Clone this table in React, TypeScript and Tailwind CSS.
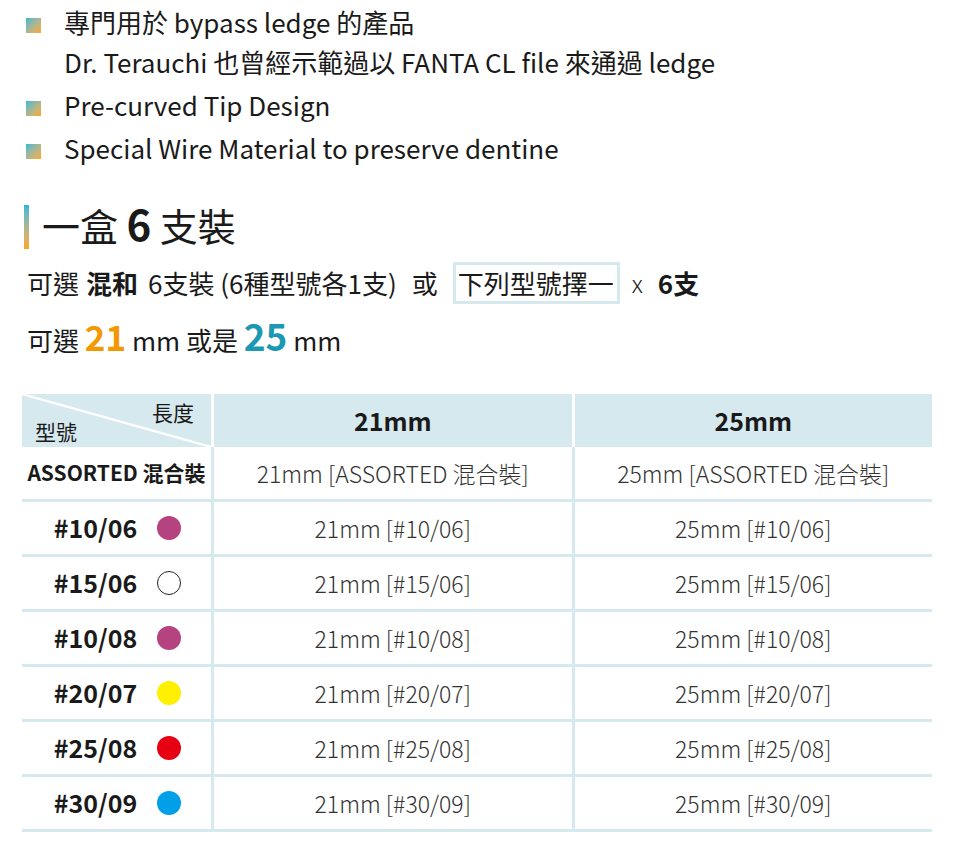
const FONT = "font-['Noto_Sans_CJK_TC','Noto_Sans',sans-serif]";

const features = [
  ["專門用於 bypass ledge 的產品", "Dr. Terauchi 也曾經示範過以 FANTA CL file 來通過 ledge"],
  ["Pre-curved Tip Design"],
  ["Special Wire Material to preserve dentine"],
];

const models = [
  { name: "#10/06", color: "bg-[#b4437f]" },
  { name: "#15/06", color: "bg-white border border-[#222]" },
  { name: "#10/08", color: "bg-[#b4437f]" },
  { name: "#20/07", color: "bg-[#fff000]" },
  { name: "#25/08", color: "bg-[#e60012]" },
  { name: "#30/09", color: "bg-[#00a0e9]" },
];

function Row({ first, a, b }: { first: React.ReactNode; a: string; b: string }) {
  return (
    <div className="flex h-[55px] border-b-[3px] border-[#d6e9ef]">
      <div className="w-[189px] flex items-center justify-center">{first}</div>
      <div className="flex-1 border-l-[3px] border-[#d6e9ef] flex items-center justify-center text-[23px] font-light text-[#333]">
        {a}
      </div>
      <div className="flex-1 border-l-[3px] border-[#d6e9ef] flex items-center justify-center text-[23px] font-light text-[#333]">
        {b}
      </div>
    </div>
  );
}

export default function App() {
  return (
    <div className={`${FONT} bg-white w-[959px] h-[856px] text-[#1a1a1a] overflow-hidden`}>
      {/* Feature bullets */}
      <ul className="pl-[26px] pt-[2px] flex flex-col gap-[3px]">
        {features.map((lines, i) => (
          <li key={i} className="flex gap-[23px] text-[26px] leading-[40px]">
            <span className="mt-[16px] w-[15px] h-[15px] shrink-0 bg-gradient-to-br from-[#18b8d4] to-[#fca810]" />
            <div>
              {lines.map((l) => (
                <div key={l}>{l}</div>
              ))}
            </div>
          </li>
        ))}
      </ul>

      {/* Heading */}
      <div className="mt-[33px] pl-[24px] flex items-center gap-[13px]">
        <span className="w-[5px] h-[44px] bg-gradient-to-b from-[#1ab8d8] to-[#fca810]" />
        <h2 className="text-[38px] leading-[44px] font-normal pb-[5px]">
          一盒 <span className="font-bold text-[42px]">6</span> 支裝
        </h2>
      </div>

      <div className="mt-[9px] pl-[27px] text-[26px] leading-[44px] flex items-center whitespace-nowrap">
        <span>可選</span>
        <span className="ml-[7px] font-bold">混和</span>
        <span className="ml-[10px]">6支裝 (6種型號各1支)</span>
        <span className="ml-[15px]">或</span>
        <span className="ml-[15px] border-[3px] border-[#d6e9ef] pl-[2px] pr-[3px] leading-[36px]">下列型號擇一</span>
        <span className="ml-[12px] text-[24px] font-light">x</span>
        <span className="ml-[15px] font-bold">6支</span>
      </div>

      <div className="mt-[7px] pl-[27px] text-[26px] leading-[46px] flex items-baseline whitespace-pre">
        <span>可選 </span>
        <span className="font-bold text-[35px] text-[#f39800]">21</span>
        <span> mm 或是 </span>
        <span className="font-bold text-[37px] text-[#1b98b4]">25</span>
        <span> mm</span>
      </div>

      {/* Table */}
      <div className="mt-[31px] ml-[22px] w-[910px]">
        <div className="flex gap-[3px] h-[53px]">
          <div className="relative w-[189px] bg-[#d6e9ef]">
            <svg className="absolute inset-0 w-full h-full" preserveAspectRatio="none" viewBox="0 0 189 53">
              <line x1="0" y1="0" x2="189" y2="53" stroke="#fff" strokeWidth="2.2" />
            </svg>
            <span className="absolute right-[17px] top-[4px] text-[21px] leading-[28px]">長度</span>
            <span className="absolute left-[13px] bottom-[2px] text-[21px] leading-[28px]">型號</span>
          </div>
          <div className="flex-1 bg-[#d6e9ef] flex items-center justify-center text-[25px] font-bold">21mm</div>
          <div className="flex-1 bg-[#d6e9ef] flex items-center justify-center text-[25px] font-bold">25mm</div>
        </div>

        <Row
          first={<span className="text-[21px] font-bold">ASSORTED 混合裝</span>}
          a="21mm [ASSORTED 混合裝]"
          b="25mm [ASSORTED 混合裝]"
        />
        {models.map((m) => (
          <Row
            key={m.name}
            first={
              <div className="flex items-center gap-[20px] pl-[2px]">
                <span className="text-[25px] font-bold">{m.name}</span>
                <span className={`w-[24px] h-[24px] rounded-full ${m.color}`} />
              </div>
            }
            a={`21mm [${m.name}]`}
            b={`25mm [${m.name}]`}
          />
        ))}
      </div>
    </div>
  );
}
